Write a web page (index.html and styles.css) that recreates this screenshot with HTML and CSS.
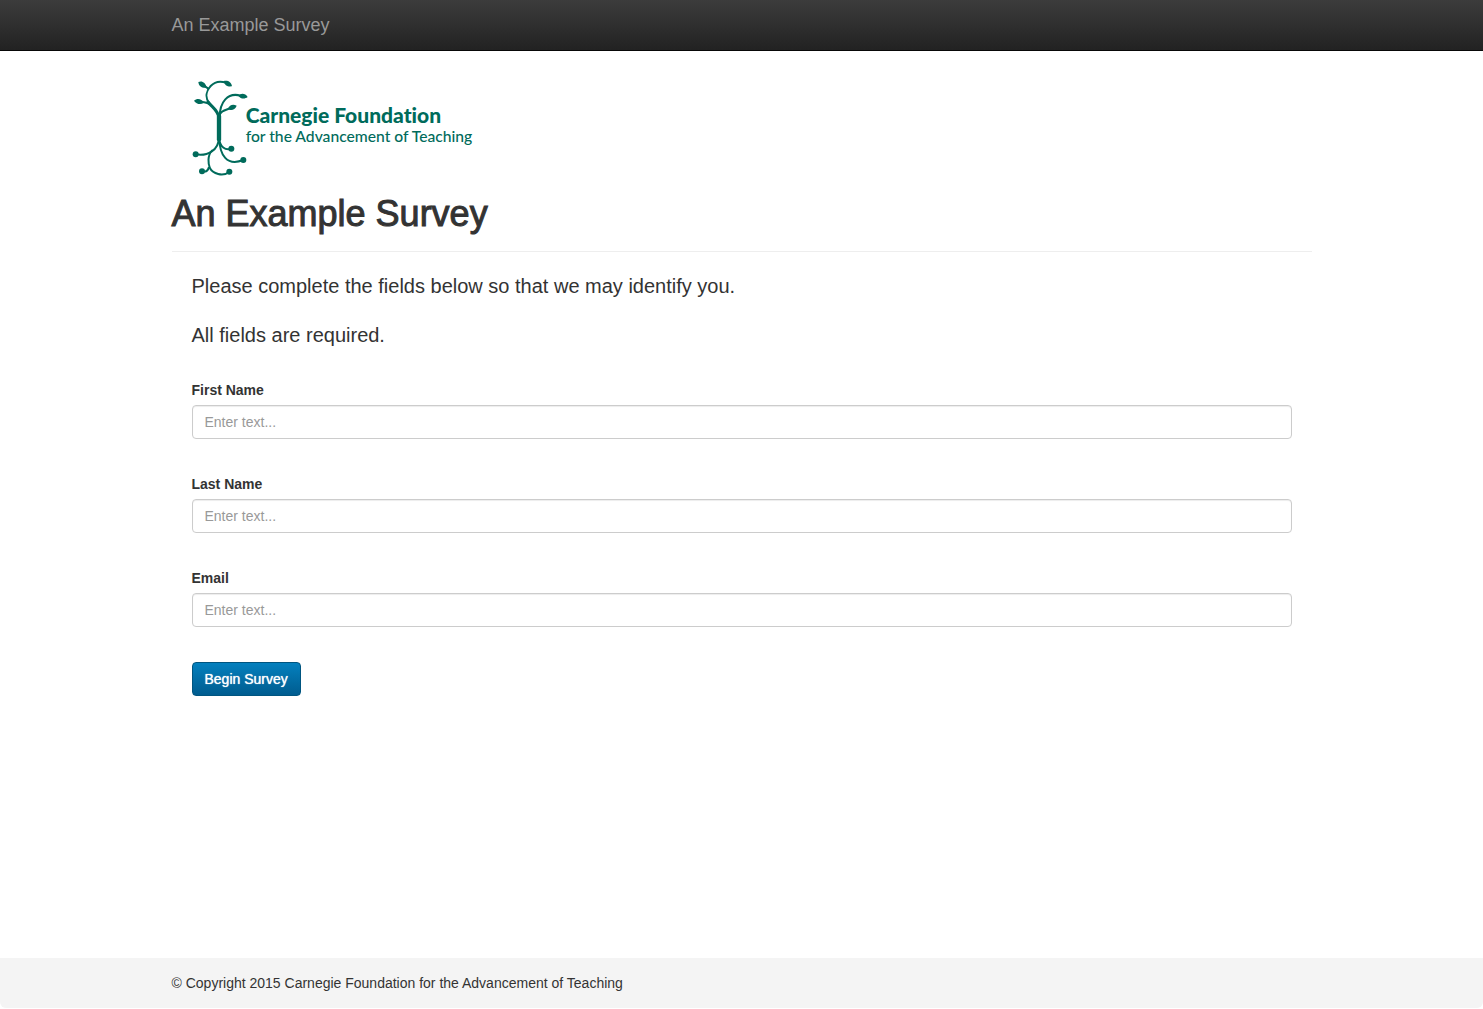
FILE: index.html
```html
<!DOCTYPE html>
<html lang="en">
<head>
  <meta charset="utf-8">
  <meta name="viewport" content="width=device-width, initial-scale=1">
  <title>An Example Survey</title>
  <link rel="stylesheet" href="styles.css">
</head>
<body>
  <header class="navbar">
    <div class="container">
      <a class="navbar-brand" href="#">An Example Survey</a>
    </div>
  </header>

  <main class="container content">
    <div class="logo">
      <svg class="logo-art" viewBox="36 30 900 294" role="img" aria-label="Carnegie Foundation for the Advancement of Teaching">
        <g class="stems">
          <path class="trunk" d="M117 138V208"/>
          <path class="limb" d="M117 145C115 120 96 112 84 96"/>
          <path d="M88 100C74 82 79 62 92 48C103 36 120 32 138 38"/>
          <path d="M119 142C119 96 143 66 182 77"/>
          <path d="M64 42L85 56M60 94C70 98 80 96 88 102M120 132C126 120 142 120 154 113"/>
          <path d="M116 206C116 238 84 260 47 253"/>
          <path d="M96 242C82 256 84 282 90 295C98 310 128 322 148 305"/>
          <path d="M66 304C76 306 84 302 86 293M118 206C119 230 136 242 154 236M118 206C119 254 140 290 190 270"/>
        </g>
        <g class="leaves">
          <path d="M55 36C65 31 77 37 80 53C66 55 56 49 55 36Z"/>
          <path d="M131 33C143 30 154 35 156 49C143 51 133 46 131 33Z"/>
          <path d="M175 77C183 68 196 69 203 81C194 88 182 87 175 77Z"/>
          <path d="M42 92C51 84 64 85 72 98C62 105 50 103 42 92Z"/>
          <path d="M144 116C148 104 160 102 170 107C165 120 152 124 144 116Z"/>
          <circle cx="47" cy="253" r="9"/>
          <circle cx="154" cy="236" r="9"/>
          <circle cx="190" cy="270" r="9"/>
          <circle cx="66" cy="304" r="9"/>
          <circle cx="148" cy="305" r="9"/>
        </g>
        <text class="logo-name" x="197" y="160">Carnegie Foundation</text>
        <text class="logo-tagline" x="197" y="216">for the Advancement of Teaching</text>
      </svg>
    </div>

    <h1 class="page-header">An Example Survey</h1>

    <form class="survey-form">
      <p class="lead">Please complete the fields below so that we may identify you.</p>
      <p class="lead">All fields are required.</p>

      <div class="form-group">
        <label for="first-name">First Name</label>
        <input class="form-control" id="first-name" type="text" placeholder="Enter text...">
      </div>
      <div class="form-group">
        <label for="last-name">Last Name</label>
        <input class="form-control" id="last-name" type="text" placeholder="Enter text...">
      </div>
      <div class="form-group">
        <label for="email">Email</label>
        <input class="form-control" id="email" type="text" placeholder="Enter text...">
      </div>
      <button class="btn-primary" type="submit">Begin Survey</button>
    </form>
  </main>

  <footer class="footer">
    <div class="container">© Copyright 2015 Carnegie Foundation for the Advancement of Teaching</div>
  </footer>
</body>
</html>
```

FILE: styles.css
```css
* {
  box-sizing: border-box;
}

body {
  display: flex;
  flex-direction: column;
  min-height: 100vh;
  margin: 0;
  padding-bottom: 1px;
  background: #fff;
  color: #333;
  font-family: "Helvetica Neue", Helvetica, "Liberation Sans", Arial, sans-serif;
  font-size: 14px;
  line-height: 20px;
}

.container {
  width: 100%;
  max-width: 1170px;
  margin: 0 auto;
  padding: 0 15px;
}

.navbar {
  border-bottom: 1px solid #080808;
  background: linear-gradient(#3c3c3c, #222);
}

.navbar-brand {
  display: inline-block;
  padding: 15px 0;
  color: #999;
  font-size: 18px;
  line-height: 20px;
  text-decoration: none;
}

.content {
  flex: 1;
}

.logo {
  padding: 29px 20px 0;
}

.logo-art {
  display: block;
  width: 300px;
  height: 98px;
}

.stems {
  fill: none;
  stroke: #006b5b;
  stroke-width: 6;
  stroke-linecap: round;
}

.trunk {
  stroke-width: 13;
}

.limb {
  stroke-width: 9;
}

.leaves,
.logo-name,
.logo-tagline {
  fill: #006b5b;
}

.logo-name,
.logo-tagline {
  font-family: Lato, sans-serif;
  font-variant-ligatures: none;
}

.logo-name {
  font-size: 63px;
  font-weight: 900;
}

.logo-tagline {
  font-size: 47px;
  font-weight: 500;
}

.page-header {
  margin: 16px 0 20px;
  padding-bottom: 17px;
  border-bottom: 1px solid #eee;
  font-size: 36px;
  font-weight: 500;
  line-height: 40px;
  -webkit-text-stroke: 1px #333;
}

.survey-form {
  padding: 0 20px;
}

.lead {
  margin: 0 0 20px;
  font-size: 20px;
  font-weight: 300;
  line-height: 29px;
}

.form-group {
  margin: 0 0 35px;
}

.lead + .form-group {
  margin-top: 30px;
}

label {
  display: block;
  margin-bottom: 5px;
  font-weight: 700;
}

.form-control {
  display: block;
  width: 100%;
  height: 34px;
  padding: 6px 12px;
  border: 1px solid #ccc;
  border-radius: 4px;
  background: #fff;
  box-shadow: inset 0 1px 1px rgba(0, 0, 0, 0.075);
  color: #555;
  font: inherit;
}

.form-control::placeholder {
  color: #999;
  opacity: 1;
}

.btn-primary {
  display: block;
  height: 34px;
  padding: 6px 12px;
  border: 1px solid #005580;
  border-radius: 4px;
  background: linear-gradient(#0480be, #005c8f);
  color: #fff;
  font: inherit;
  font-weight: 500;
  text-shadow: 0 0 1px #fff;
}

.footer {
  padding: 15px 0;
  border-radius: 0 0 6px 6px;
  background: #f4f4f4;
}
```
